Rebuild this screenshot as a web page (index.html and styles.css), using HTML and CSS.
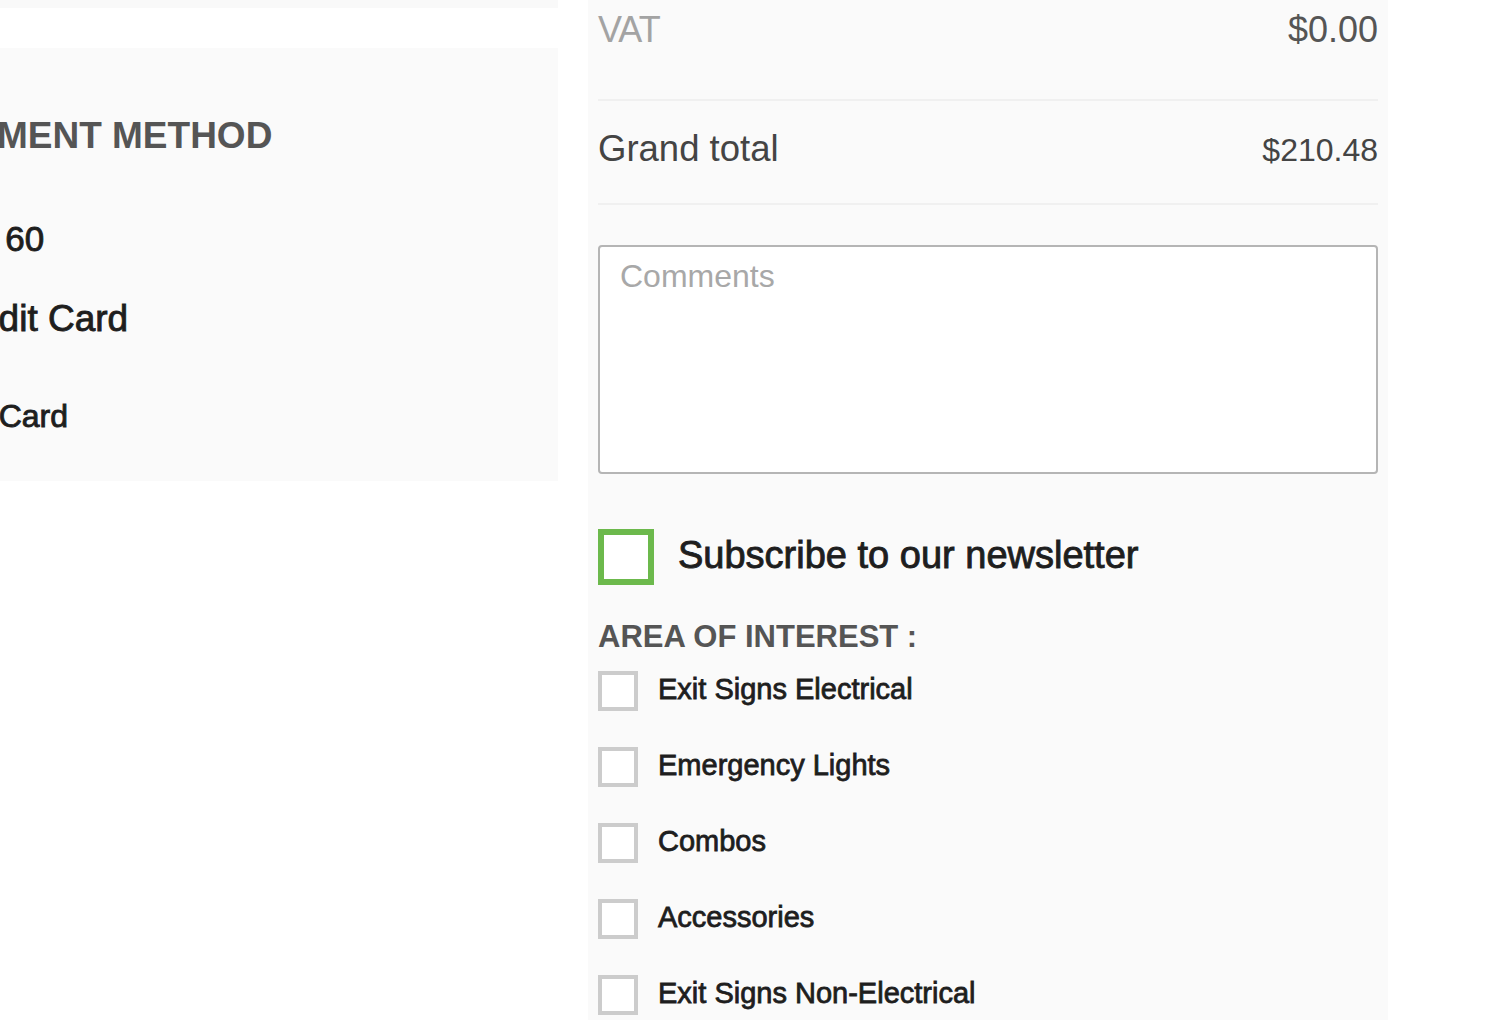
FILE: index.html
```html
<!DOCTYPE html>
<html lang="en">
<head>
<meta charset="utf-8">
<title>Checkout</title>
<link rel="stylesheet" href="styles.css">
</head>
<body>
<div class="page">
  <div class="left-col">
    <div class="top-strip"></div>
    <div class="gap-white"></div>
    <section class="payment-panel">
      <div class="payment-inner">
        <h2 class="panel-title">PAYMENT METHOD</h2>
        <div class="opt opt-net">Net 60</div>
        <div class="opt opt-credit">Credit Card</div>
        <div class="opt opt-sub">Gift Card</div>
      </div>
    </section>
  </div>

  <aside class="summary">
    <div class="sum-row row-vat">
      <span class="vat-label">VAT</span>
      <span class="vat-value">$0.00</span>
    </div>
    <div class="sum-row row-grand">
      <span class="grand-label">Grand total</span>
      <span class="grand-value">$210.48</span>
    </div>

    <textarea class="comments" placeholder="Comments"></textarea>

    <label class="newsletter">
      <input type="checkbox" class="big-check">
      <span class="newsletter-text">Subscribe to our newsletter</span>
    </label>

    <h3 class="interest-title">AREA OF INTEREST :</h3>
    <ul class="interest-list">
      <li><label class="interest-item"><input type="checkbox" class="small-check"><span>Exit Signs Electrical</span></label></li>
      <li><label class="interest-item"><input type="checkbox" class="small-check"><span>Emergency Lights</span></label></li>
      <li><label class="interest-item"><input type="checkbox" class="small-check"><span>Combos</span></label></li>
      <li><label class="interest-item"><input type="checkbox" class="small-check"><span>Accessories</span></label></li>
      <li><label class="interest-item"><input type="checkbox" class="small-check"><span>Exit Signs Non-Electrical</span></label></li>
    </ul>
  </aside>
</div>
</body>
</html>
```

FILE: styles.css
```css
* { box-sizing: border-box; }

html, body {
  margin: 0;
  padding: 0;
  background: #ffffff;
  font-family: "Liberation Sans", Arial, Helvetica, sans-serif;
  overflow: hidden;
}

.page {
  display: flex;
  gap: 30px;
  align-items: flex-start;
}

/* ---------- left column ---------- */
.left-col {
  width: 558px;
  flex: 0 0 558px;
  display: flex;
  flex-direction: column;
}

.top-strip {
  height: 8px;
  background: #f9f9f9;
}

.gap-white {
  height: 40px;
}

.payment-panel {
  background: #fafafa;
  height: 433px;
  overflow: hidden;
}

.payment-inner {
  margin-left: -73px;
  display: flex;
  flex-direction: column;
}

.panel-title {
  margin: 66px 0 0 0;
  font-size: 37px;
  line-height: 44px;
  font-weight: 700;
  color: #555555;
  white-space: nowrap;
}

.opt {
  color: #1e1e1e;
  white-space: nowrap;
  padding-left: 14px;
  -webkit-text-stroke: 0.9px #1e1e1e;
}

.opt-net {
  margin-top: 60px;
  font-size: 35px;
  line-height: 42px;
}

.opt-credit {
  margin-top: 38px;
  font-size: 37px;
  line-height: 42px;
  padding-left: 12px;
}

.opt-sub {
  margin-top: 57px;
  font-size: 32px;
  line-height: 38px;
  padding-left: 13px;
}

/* ---------- right summary ---------- */
.summary {
  width: 800px;
  flex: 0 0 800px;
  background: #fafafa;
  padding: 0 10px 80px 10px;
  min-height: 1100px;
  display: flex;
  flex-direction: column;
}

.sum-row {
  display: flex;
  justify-content: space-between;
  align-items: baseline;
  border-bottom: 2px solid #f0f0f0;
}

.row-vat {
  padding: 10px 0 49px 0;
  line-height: 40px;
}

.row-grand {
  padding: 28px 0 33px 0;
  line-height: 40px;
}

.vat-label {
  font-size: 36px;
  color: #a3a3a3;
  letter-spacing: -1px;
}

.vat-value {
  font-size: 36px;
  color: #555555;
}

.grand-label {
  font-size: 36.5px;
  color: #444444;
}

.grand-value {
  font-size: 32px;
  color: #444444;
}

.comments {
  margin: 40px 0 0 0;
  width: 780px;
  height: 229px;
  border: 2px solid #b5b5b5;
  border-radius: 4px;
  background: #ffffff;
  padding: 10px 20px;
  font-family: "Liberation Sans", Arial, Helvetica, sans-serif;
  font-size: 32px;
  line-height: 38px;
  color: #333333;
  resize: none;
  outline: none;
  display: block;
}

.comments::placeholder {
  color: #a8a8a8;
}

.newsletter {
  margin-top: 55px;
  display: flex;
  align-items: center;
  gap: 24px;
}

.big-check {
  appearance: none;
  -webkit-appearance: none;
  margin: 0;
  width: 56px;
  height: 56px;
  border: 6px solid #6cb94c;
  background: #ffffff;
  flex: 0 0 56px;
}

.newsletter-text {
  font-size: 38px;
  line-height: 44px;
  color: #1e1e1e;
  -webkit-text-stroke: 0.9px #1e1e1e;
  white-space: nowrap;
  position: relative;
  top: -2px;
}

.interest-title {
  margin: 34px 0 0 0;
  font-size: 31px;
  line-height: 36px;
  font-weight: 700;
  color: #555555;
}

.interest-list {
  list-style: none;
  margin: 16px 0 0 0;
  padding: 0;
  display: flex;
  flex-direction: column;
  gap: 36px;
}

.interest-item {
  display: flex;
  align-items: center;
  gap: 20px;
}

.small-check {
  appearance: none;
  -webkit-appearance: none;
  margin: 0;
  width: 40px;
  height: 40px;
  flex: 0 0 40px;
  border: 4px solid #cccccc;
  background: #ffffff;
}

.interest-item span {
  font-size: 29px;
  line-height: 34px;
  color: #1e1e1e;
  -webkit-text-stroke: 0.8px #1e1e1e;
  white-space: nowrap;
  position: relative;
  top: -2px;
}
```
